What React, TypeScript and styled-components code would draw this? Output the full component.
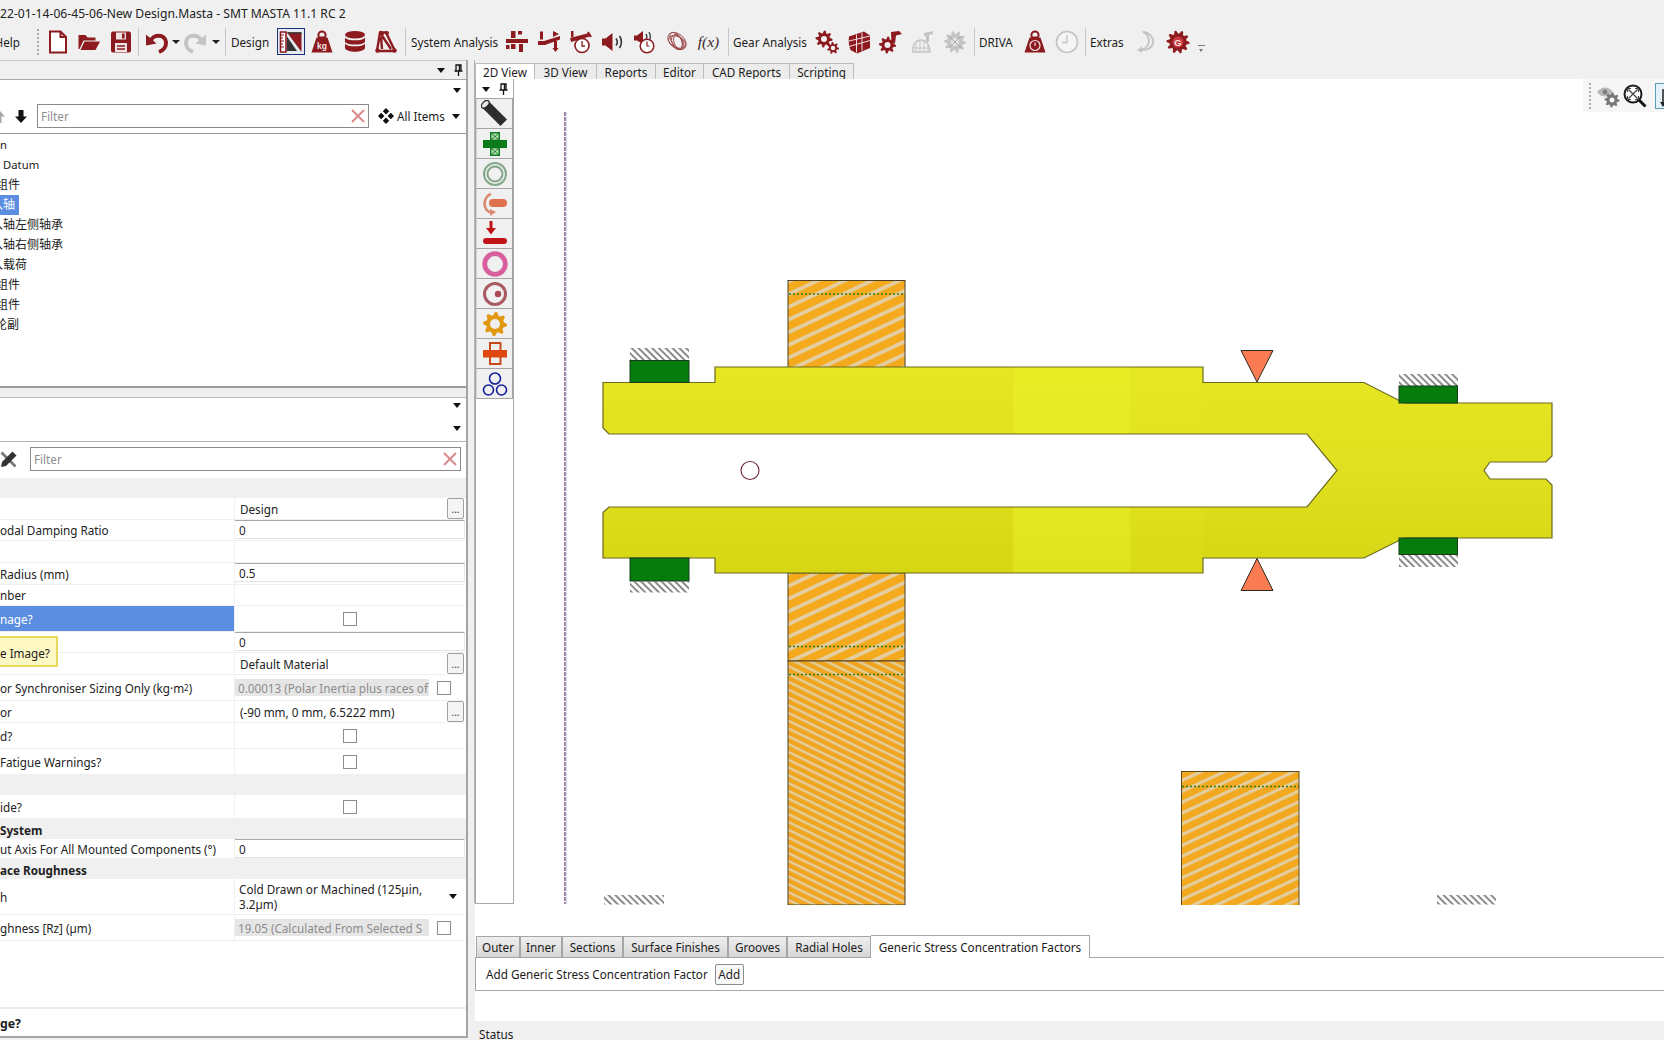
import React from "react";
import styled, { createGlobalStyle } from "styled-components";

const RED = "#8c1a1f";
const GRAYICON = "#c4c4c4";
const UI = '"Noto Sans", "Noto Sans CJK SC", sans-serif';

const Global = createGlobalStyle`
  html, body { margin: 0; padding: 0; }
  body { width: 1664px; height: 1040px; overflow: hidden; background: #f0f0f0; font-family: ${UI}; font-size: 11.7px; color: #1c1c1c; }
  #root { width: 1664px; height: 1040px; }
`;

const Window = styled.div`
  width: 1664px; height: 1040px; display: flex; flex-direction: column; overflow: hidden; background: #f0f0f0;
`;
const TitleBar = styled.div`
  height: 27px; line-height: 28px; font-size: 12.15px; white-space: nowrap; color: #222; flex: none;
`;
const Toolbar = styled.div`
  height: 33px; flex: none; display: flex; align-items: center; padding-bottom: 4px; box-sizing: border-box; position: relative;
`;
const HelpLabel = styled.div`
  width: 20px; display: flex; justify-content: flex-end; overflow: hidden; font-size: 11.7px; flex: none;
`;
const Grip = styled.div`
  width: 0; height: 26px; border-left: 2px dotted #a8a8a8; margin: 0 4px 0 17px; flex: none;
`;
const Sep = styled.div<{ $r?: number; $l?: number }>`
  width: 1px; height: 28px; background: #c8c8c8; flex: none; margin: 0 ${(p) => p.$r ?? 5}px 0 ${(p) => p.$l ?? 3}px;
`;
const ToolLabel = styled.div<{ $w: number }>`
  font-size: 11.7px; white-space: nowrap; flex: none; width: ${(p) => p.$w}px;
`;
const Slot = styled.div<{ $w?: number; $active?: boolean }>`
  width: ${(p) => p.$w ?? 32}px; height: 27px; flex: none; display: flex; align-items: center; justify-content: center;
  box-sizing: border-box;
  ${(p) => (p.$active ? "border: 1.5px solid #1d2f78; background: #e4ecf6;" : "")}
`;
const MiniCaret = styled.div<{ $r?: number; $l?: number }>`
  width: 0; height: 0; border-left: 4px solid transparent; border-right: 4px solid transparent; border-top: 4px solid #222;
  flex: none; margin: 0 ${(p) => p.$r ?? 0}px 0 ${(p) => p.$l ?? 0}px;
`;
const Overflow = styled.div`
  width: 7px; height: 8px; flex: none; margin: 16px 0 0 4px; border-top: 1px solid #777; position: relative;
  &::after { content: ""; position: absolute; left: 1px; top: 3px; border-left: 2.5px solid transparent; border-right: 2.5px solid transparent; border-top: 3px solid #777; }
`;

const Main = styled.div`flex: 1; display: flex; min-height: 0;`;
const LeftPanel = styled.div`
  width: 468px; flex: none; display: flex; flex-direction: column; background: #fff;
  border-right: 2px solid #a4a4a4; box-sizing: border-box; border-bottom: 2px solid #a4a4a4; height: 978px;
`;
const PanelHead = styled.div`
  height: 18px; flex: none; background: #f0f0f0; border-top: 1px solid #c8c8c8; border-bottom: 1px solid #a8a8a8;
  display: flex; align-items: center; justify-content: flex-end; gap: 9px; padding-right: 3px;
`;
const Caret = styled.div`
  width: 0; height: 0; border-left: 4.5px solid transparent; border-right: 4.5px solid transparent; border-top: 5px solid #111; flex: none;
`;
const CaretRow = styled.div<{ $h: number; $pt?: number }>`
  height: ${(p) => p.$h}px; flex: none; display: flex; align-items: center; justify-content: flex-end; padding-right: 5px; background: #fff;
  box-sizing: border-box; padding-top: ${(p) => p.$pt ?? 0}px;
`;
const FilterRow = styled.div<{ $h?: number; $pb?: number }>`
  height: ${(p) => p.$h ?? 32}px; flex: none; display: flex; align-items: center; background: #fff; box-sizing: border-box; padding-bottom: ${(p) => p.$pb ?? 0}px;
`;
const FilterBox = styled.div<{ $w: number; $ml: number }>`
  width: ${(p) => p.$w}px; margin-left: ${(p) => p.$ml}px; height: 24px; border: 1px solid #8a8a8a; box-sizing: border-box; background: #fff;
  display: flex; align-items: center; justify-content: space-between; padding: 0 3px; color: #8e8e8e; font-size: 11.7px; flex: none;
`;
const AllItems = styled.div`
  display: flex; align-items: center; margin-left: 9px; gap: 3px; font-size: 11.7px;
`;
const CaretSpacer = styled.span`width: 1px;`;
const ArrowSlot = styled.div<{ $ml: number }>`
  margin-left: ${(p) => p.$ml}px; display: flex; flex: none;
`;
const Tree = styled.div`
  height: 255px; flex: none; box-sizing: border-box; border-top: 1px solid #9a9a9a; border-bottom: 2px solid #9a9a9a; padding-top: 1px; background: #fff; overflow: hidden;
`;
const TreeRow = styled.div`
  height: 20px; line-height: 20px; white-space: nowrap; font-size: 12px; color: #222; display: flex; overflow: hidden;
`;
const TreeText = styled.span<{ $x: number; $sel?: boolean; $pad?: number; $latin?: boolean }>`
  margin-left: ${(p) => p.$x}px; padding-right: ${(p) => p.$pad ?? 0}px;
  ${(p) => (p.$latin ? "font-size: 11.3px;" : "")}
  ${(p) => (p.$sel ? "background: #5b8ee0; color: #fff;" : "")}
`;
const Splitter = styled.div`height: 10px; flex: none; box-sizing: border-box; background: #f0f0f0; border-bottom: 1px solid #b8b8b8;`;
const Divider = styled.div`height: 1px; flex: none; background: #b4b4b4;`;
const GroupBand = styled.div<{ $h: number }>`
  height: ${(p) => p.$h}px; flex: none; background: #f0f0f0; font-weight: 700; font-size: 11.7px; line-height: ${(p) => p.$h + 2}px; white-space: nowrap; color: #222;
`;
const Row = styled.div<{ $h: number }>`
  height: ${(p) => p.$h}px; flex: none; display: flex; background: #fff; box-sizing: border-box; border-bottom: 1px solid #f0f0f0; position: relative;
  width: 465px;
`;
const Label = styled.div<{ $sel?: boolean }>`
  width: 234px; flex: none; display: flex; align-items: center; white-space: nowrap; overflow: hidden; font-size: 11.7px; color: #222;
  box-sizing: border-box;
  ${(p) => (p.$sel ? "background: #5b8ee0; color: #fff;" : "")}
`;
const Value = styled.div<{ $center?: boolean }>`
  flex: 1; display: flex; align-items: center; border-left: 1px solid #f0f0f0; font-size: 11.7px; position: relative; min-width: 0; color: #222;
  ${(p) => (p.$center ? "justify-content: center;" : "")}
`;
const PlainValue = styled.span`padding-left: 5px; white-space: nowrap;`;
const NumberInput = styled.div`
  align-self: flex-start; width: 100%; height: 19px; line-height: 18px; border-top: 1px solid #a8a8a8; border-right: 1px solid #ececec; border-bottom: 1px solid #e4e4e4; box-sizing: border-box; padding-left: 4px;
  white-space: nowrap;
`;
const DotsButton = styled.div`
  position: absolute; right: 1px; top: 0; width: 17px; height: 21px; box-sizing: border-box; border: 1px solid #a0a0a0; border-radius: 2px; background: #f4f4f4;
  font-size: 10px; text-align: center; line-height: 20px; color: #333;
`;
const Check = styled.div`
  width: 14px; height: 14px; box-sizing: border-box; border: 1px solid #8c8c8c; background: #fff; flex: none;
`;
const DisabledInput = styled.div`
  width: 194px; height: 17px; line-height: 18px; background: #e6e6e6; color: #8c8c8c; font-size: 11.7px; padding-left: 3px; box-sizing: border-box; overflow: hidden; white-space: nowrap; flex: none;
`;
const SideCheck = styled.div`margin-left: 8px; display: flex;`;
const WrapValue = styled.div`
  padding: 1px 0 0 4px; width: 200px; line-height: 15px; font-size: 11.7px; box-sizing: content-box;
`;
const RightCaret = styled.div`margin-left: 10px;`;
const Tooltip = styled.div`
  position: absolute; left: 0; top: 636px; width: 58px; height: 31px; box-sizing: border-box; background: #fdf8c4; border: 2px solid #e9d95a; border-left: 0;
  display: flex; align-items: center; font-size: 11.7px; white-space: nowrap; overflow: hidden; z-index: 3; padding-top: 2px;
`;
const Filler = styled.div`flex: 1; background: #fff; border-bottom: 2px solid #ececec;`;
const FootRow = styled.div`height: 27px; flex: none; font-weight: 700; font-size: 12.3px; line-height: 29px; background: #fff; white-space: nowrap;`;

const Gutter = styled.div`
  width: 6px; flex: none; background: #f0f0f0; border-right: 1px solid #b4b4b4; height: 843px;
`;
const RightPanel = styled.div`flex: 1; min-width: 0; display: flex; flex-direction: column; position: relative;`;
const TopTabs = styled.div`height: 19px; flex: none; display: flex; align-items: flex-end; background: #f0f0f0;`;
const TopTab = styled.div<{ $w: number; $active?: boolean }>`
  width: ${(p) => p.$w}px; height: 16px; box-sizing: border-box; text-align: center; line-height: 17px; font-size: 11.7px; flex: none; white-space: nowrap;
  border: 1px solid #bcbcbc; border-bottom: 0; border-left-width: ${(p) => (p.$active ? 1 : 0)}px; background: ${(p) => (p.$active ? "#fff" : "#ececec")};
`;
const ViewArea = styled.div`height: 826px; flex: none; display: flex; background: #fff; position: relative;`;
const SideTools = styled.div`
  width: 39px; height: 825px; flex: none; box-sizing: border-box; border: 1px solid #a8a8a8; border-top: 0; background: #fff;
`;
const SideHead = styled.div`height: 20px; display: flex; align-items: center; justify-content: center; gap: 9px;`;
const SideButton = styled.div`
  height: 31px; box-sizing: border-box; border: 1px solid #a4a4a4; border-left-color: #d0d0d0; background: #f0f0f0; display: flex; align-items: center; justify-content: center;
  margin-top: -1px; &:first-of-type { margin-top: 0; }
`;
const Canvas = styled.svg`width: 1150px; height: 826px; display: block; flex: none;`;
const ViewTools = styled.div`
  position: absolute; right: 0; top: 0; width: 81px; height: 33px; background: #f6f6f6; display: flex; align-items: center; gap: 3px; padding-left: 6px; box-sizing: border-box; overflow: hidden;
  & > svg { flex: none; }
`;
const ViewGrip = styled.div`width: 0; height: 26px; border-left: 2px dotted #aaa; margin-right: 2px; flex: none;`;
const ViewActive = styled.div`
  width: 26px; height: 26px; flex: none; box-sizing: border-box; margin-left: 5px; border: 1.5px solid #5e9bb0; background: #e3f1f8; display: flex; align-items: center; padding-left: 2px;
  & > svg { flex: none; }
`;
const BottomGap = styled.div`height: 30px; flex: none; background: #fff;`;
const BottomTabs = styled.div`
  height: 22px; flex: none; background: #fff; display: flex; align-items: flex-end; padding-left: 1px; position: relative; z-index: 1;
`;
const BottomTab = styled.div<{ $w: number; $active?: boolean }>`
  width: ${(p) => p.$w}px; flex: none; box-sizing: border-box; text-align: center; font-size: 11.7px; white-space: nowrap;
  height: ${(p) => (p.$active ? 23 : 21)}px; line-height: ${(p) => (p.$active ? 23 : 21)}px;
  border: 1px solid #a6a6a6; border-bottom: 0; border-left-width: ${(p) => (p.$active ? 0 : 1)}px;
  background: ${(p) => (p.$active ? "#fff" : "linear-gradient(#efefef,#d6d6d6)")};
  ${(p) => (p.$active ? "margin-bottom: -1px;" : "")}
`;
const AddBar = styled.div`
  height: 34px; flex: none; box-sizing: border-box; background: #fff; border: 1px solid #a6a6a6; border-right: 0; display: flex; align-items: center; padding-left: 10px; gap: 7px; font-size: 11.7px; white-space: nowrap;
`;
const AddButton = styled.div`
  width: 29px; height: 21px; box-sizing: border-box; border: 1px solid #8c8c8c; border-radius: 2px; text-align: center; line-height: 19px; background: #f8f8f8; font-size: 11.7px;
`;
const BlankBar = styled.div`height: 30px; flex: none; background: #fff;`;
const StatusBar = styled.div`flex: 1; background: #f0f0f0; padding-left: 4px; font-size: 11.7px; line-height: 26px; overflow: hidden;`;
const Sup = styled.sup`font-size: 8px; line-height: 0;`;

type IconProps = { c?: string };
const gearPath = (cx: number, cy: number, r: number, teeth: number, depth = 2.6) => {
  const pts: string[] = [];
  const n = teeth * 4;
  for (let i = 0; i < n; i++) {
    const a = (i / n) * Math.PI * 2;
    const rr = i % 4 < 2 ? r : r - depth;
    pts.push(`${(cx + rr * Math.cos(a)).toFixed(2)} ${(cy + rr * Math.sin(a)).toFixed(2)}`);
  }
  return "M" + pts.join("L") + "Z";
};
const Ico: React.FC<{ s?: number; children: React.ReactNode }> = ({ s = 24, children }) => (
  <svg width={s} height={s} viewBox="0 0 24 24">{children}</svg>
);
const NewDocIcon = ({ c = RED }: IconProps) => (
  <Ico><path d="M4 1.5h10.5l5.5 5.5v15.5H4z M14.5 1.5V7h5.5" fill="#fff" stroke={c} strokeWidth="2" /></Ico>
);
const OpenIcon = ({ c = RED }: IconProps) => (
  <Ico><path d="M1.5 5h7l2 2.5h8v3H6.5L2.5 19H1.5z" fill={c} /><path d="M7.5 11.5H23L18.5 20H3.5z" fill={c} /></Ico>
);
const SaveIcon = ({ c = RED }: IconProps) => (
  <Ico><path d="M2 3.5Q2 1.5 4 1.5h16Q22 1.5 22 3.5v17Q22 22.5 20 22.5H4Q2 22.5 2 20.5z" fill={c} /><rect x="7" y="2.5" width="10" height="7" fill="#efe4e4" /><rect x="13" y="3.5" width="2.6" height="5" fill={c} /><rect x="6" y="13" width="12" height="9" fill="#efe4e4" /><path d="M8 16h8M8 19h8" stroke={c} strokeWidth="1.4" /></Ico>
);
const UndoIcon = ({ c = RED }: IconProps) => (
  <Ico><path d="M6 10.5C8 4.5 20 3.5 21 12c.5 5-3 8.5-7 10" fill="none" stroke={c} strokeWidth="4" /><path d="M1 4.5l0 11 10.5-2z" fill={c} /></Ico>
);
const RedoIcon = ({ c = GRAYICON }: IconProps) => (
  <Ico><path d="M18 10.5C16 4.5 4 3.5 3 12c-.5 5 3 8.5 7 10" fill="none" stroke={c} strokeWidth="4" /><path d="M23 4.5v11L12.5 13.5z" fill={c} /></Ico>
);
const DesignIcon = () => (
  <Ico>
    <path d="M1.5 2h5.5v20H1.5z" fill="#fff" stroke={RED} strokeWidth="1.6" />
    <path d="M2 5h3M2 8h2M2 11h3M2 14h2M2 17h3" stroke={RED} strokeWidth="1" />
    <path d="M8 2.5h14.5v19.5z" fill={RED} /><path d="M8 6.5L18 21H8z" fill="#333" />
    <path d="M8.5 3h14" stroke="#333" strokeWidth="1.5" />
  </Ico>
);
const WeightIcon = ({ label }: { label: string }) => (
  <Ico>
    <path d="M12 1.5a3.6 3.6 0 0 1 3.6 3.6c0 1-.3 1.7-.8 2.4H9.2c-.5-.7-.8-1.4-.8-2.4A3.6 3.6 0 0 1 12 1.5z" fill="none" stroke={RED} strokeWidth="2" />
    <path d="M6.5 7.5h11L22.5 22.5H1.5z" fill={RED} />
    <text x="12" y="19" textAnchor="middle" fontSize="8.5" fontWeight="700" fill="#f2e3e3" fontFamily="Liberation Sans, sans-serif">{label}</text>
  </Ico>
);
const DbIcon = () => (
  <Ico>
    <ellipse cx="12" cy="4.8" rx="10" ry="3.8" fill={RED} />
    <path d="M2 7.5c2 3.8 18 3.8 20 0v4.2c-2 3.8-18 3.8-20 0z" fill={RED} />
    <path d="M2 13.5c2 3.8 18 3.8 20 0v4.5c-1.5 5-18.5 5-20 0z" fill={RED} />
  </Ico>
);
const FrameIcon = () => (
  <Ico>
    <path d="M6 2.5h6L21 21H3zM7 7L8 19M7.5 5L17 19M9 2.5l-1 4" fill="none" stroke={RED} strokeWidth="2.4" strokeLinejoin="round" />
    <circle cx="3.5" cy="20.5" r="2.2" fill={RED} /><circle cx="20.5" cy="20.5" r="2.2" fill={RED} /><circle cx="7" cy="3" r="2.2" fill={RED} /><circle cx="13" cy="3" r="2" fill={RED} />
  </Ico>
);
const ShaftCrossIcon = () => (
  <Ico><path d="M1 9h22v4H1z" fill={RED} /><rect x="6" y="1" width="4.5" height="7" fill={RED} /><rect x="13" y="1" width="4" height="3.5" fill={RED} /><rect x="6" y="14" width="4.5" height="5" fill={RED} /><rect x="14" y="14" width="4" height="8" fill={RED} /><rect x="1" y="15" width="3.5" height="4" fill={RED} /></Ico>
);
const ShaftBendIcon = () => (
  <Ico><path d="M1 11h6l16-5v3.5L8 15H1z" fill={RED} /><rect x="3" y="1.5" width="3" height="8" fill={RED} /><rect x="17" y="11" width="3" height="9" fill={RED} /><path d="M18.5 22l-3-4h6z" fill={RED} /><path d="M16 1l6 3-6 3z" fill={RED} /></Ico>
);
const BeamClockIcon = () => (
  <Ico>
    <path d="M1 8l19-5 .8 3.5L2 12z" fill={RED} /><rect x="2" y="1" width="2.5" height="6" fill={RED} /><path d="M19 2l3 5" stroke={RED} strokeWidth="2" />
    <circle cx="13" cy="15.5" r="7" fill="#fff" stroke={RED} strokeWidth="1.6" /><path d="M13 11v5h3" fill="none" stroke={RED} strokeWidth="1.3" />
  </Ico>
);
const SpeakerIcon = () => (
  <Ico><path d="M1 8.5h3.5L11.5 3v18L4.5 15.5H1z" fill={RED} /><path d="M15 8.5c1.5 2 1.5 5 0 7M18.5 6c2.5 3.5 2.5 8.5 0 12" fill="none" stroke="#333" strokeWidth="1.6" /></Ico>
);
const SpeakerClockIcon = () => (
  <Ico><path d="M1 5.5h3L10 1v13L4 10.5H1z" fill={RED} /><path d="M13 4c1 1.5 1 4 0 5.5M16 2c1.5 3 1.5 7 0 9" fill="none" stroke="#333" strokeWidth="1.3" /><circle cx="14" cy="16" r="6.8" fill="#fff" stroke={RED} strokeWidth="1.5" /><path d="M14 11.5V16h2.5" fill="none" stroke={RED} strokeWidth="1.2" /></Ico>
);
const ScribbleIcon = () => (
  <Ico>
    <g fill="none" stroke="#9c4a4a" strokeWidth="0.9">
      <ellipse cx="12" cy="11" rx="10.5" ry="7" transform="rotate(40 12 11)" />
      <ellipse cx="12" cy="11" rx="10" ry="5" transform="rotate(55 12 11)" />
      <ellipse cx="12" cy="12" rx="9" ry="5.5" transform="rotate(25 12 12)" />
      <ellipse cx="13" cy="12" rx="7" ry="4" transform="rotate(70 13 12)" />
      <ellipse cx="12" cy="12" rx="5" ry="8" transform="rotate(-20 12 12)" />
    </g>
  </Ico>
);
const FxLabel = styled.span`font-family: "Liberation Serif", serif; font-style: italic; font-size: 15.5px; color: #3a2a2a; white-space: nowrap;`;
const GearsIcon = () => (
  <Ico><path d={gearPath(9, 9, 8.5, 8)} fill={RED} /><circle cx="9" cy="9" r="3" fill="#f0f0f0" /><path d={gearPath(18, 18, 6, 7, 2)} fill={RED} /><circle cx="18" cy="18" r="2.2" fill="#f0f0f0" /></Ico>
);
const BlockIcon = () => (
  <Ico><path d="M2 6.5L17 1.5l6 4V18l-13 5.5L3.5 20Q1 14 2 6.5z" fill={RED} /><path d="M9.5 4.5v18M15 2.5v18M2 11l21-5M2 16.5l21-6" stroke="#f0e0e0" strokeWidth="1" fill="none" /></Ico>
);
const GearToolIcon = ({ c = RED }: IconProps) => (
  <Ico><path d={gearPath(8.5, 15, 8.5, 8)} fill={c} /><circle cx="8.5" cy="15" r="3" fill="#f0f0f0" /><path d="M12 2l8-1 3 3-6 1.5-1 8h-3.5z" fill={c} /></Ico>
);
const BellHammerIcon = () => (
  <Ico><path d="M2 22c-1-7 3-12 8-12s9 5 9 12z" fill="none" stroke={GRAYICON} strokeWidth="1.5" /><path d="M5 14v8M9 11v11M13 11v11M17 15v7M2 18h17" stroke={GRAYICON} strokeWidth="1" /><path d="M13 3l9-2v3l-4 1v7h-3V6l-2 .5z" fill={GRAYICON} /></Ico>
);
const HatchGearIcon = () => (
  <Ico><path d={gearPath(12, 12, 11, 10, 3)} fill={GRAYICON} /><circle cx="12" cy="12" r="4" fill="#e4e4e4" /><path d="M6 6l12 12M18 6L6 18" stroke="#aaa" strokeWidth="1" /></Ico>
);
const WeightClockIcon = () => (
  <Ico>
    <path d="M12 1.5a3.6 3.6 0 0 1 3.6 3.6c0 1-.3 1.7-.8 2.4H9.2c-.5-.7-.8-1.4-.8-2.4A3.6 3.6 0 0 1 12 1.5z" fill="none" stroke={RED} strokeWidth="2" />
    <path d="M6.5 7.5h11L22.5 22.5H1.5z" fill={RED} />
    <circle cx="12" cy="15.5" r="5" fill="none" stroke="#f2e3e3" strokeWidth="1.2" /><path d="M12 12.5v3.5" stroke="#f2e3e3" strokeWidth="1.2" />
  </Ico>
);
const ClockIcon = () => (
  <Ico><circle cx="12" cy="12" r="10.5" fill="#f4f4f4" stroke={GRAYICON} strokeWidth="1.6" /><path d="M12 5v7.5H7" fill="none" stroke={GRAYICON} strokeWidth="1.3" /></Ico>
);
const MoonIcon = () => (
  <Ico><path d="M9 2c8 1 11 7 10 11-1 5-6 7-11 7 4-2 7-5 7-9S13 4 9 2z" fill="none" stroke={GRAYICON} strokeWidth="1.8" /><path d="M3 20l5-3.5v6.5z" fill={GRAYICON} /></Ico>
);
const GearGIcon = () => (
  <Ico>
    <path d={gearPath(12, 12, 11.5, 10, 3)} fill={RED} />
    <circle cx="12" cy="12" r="5.5" fill="#c93a42" />
    <text x="12" y="15.5" textAnchor="middle" fontSize="9.5" fontWeight="700" fill="#f6e0e0" fontFamily="Liberation Sans, sans-serif">G</text>
  </Ico>
);
const PinIcon = () => (
  <svg width="9" height="12" viewBox="0 0 9 12"><path d="M2 1h5v6H2z M0.5 7h8M4.5 7v5" fill="none" stroke="#111" strokeWidth="1.3" /><path d="M5.5 1v6" stroke="#111" strokeWidth="1.5" /></svg>
);
const FilterX = () => (
  <svg width="14" height="14" viewBox="0 0 14 14"><path d="M1 1l12 12M13 1L1 13" stroke="#d98b8b" strokeWidth="2" /></svg>
);
const ArrowGlyph = ({ up }: { up?: boolean }) => (
  <svg width="14" height="13" viewBox="0 0 14 13"><path d={up ? "M7 0l6 6.5H9.5V13h-5V6.5H1z" : "M7 13L13 6.5H9.5V0h-5v6.5H1z"} fill={up ? "#a8a8a8" : "#111"} /></svg>
);
const DiamondsIcon = () => (
  <svg width="16" height="16" viewBox="0 0 16 16" fill="#111"><path d="M8 0l3.2 3.2L8 6.4 4.8 3.2zM3.2 4.8L6.4 8 3.2 11.2 0 8zM12.8 4.8L16 8l-3.2 3.2L9.6 8zM8 9.6l3.2 3.2L8 16l-3.2-3.2z" /></svg>
);
const PencilX = () => (
  <svg width="18" height="18" viewBox="0 0 18 18"><path d="M1.5 2.5l14 14" stroke="#777" strokeWidth="2.6" /><path d="M1 17l1-5L12.5 1.5 16.5 5.5 6 16z" fill="#333" /></svg>
);

const SideShaft = () => (
  <svg width="27" height="27" viewBox="0 0 27 27"><path d="M7.5 1L26 19.5 19.5 26 1 7.5z" fill="#2e2e2e" /><ellipse cx="4.3" cy="4.3" rx="4.6" ry="2.8" transform="rotate(-45 4.3 4.3)" fill="#e8e8e8" stroke="#222" strokeWidth="1.2" /></svg>
);
const SideCross = () => (
  <svg width="26" height="26" viewBox="0 0 26 26"><path d="M1 9h24v8H1z" fill="#0b7a1a" /><rect x="8" y="1" width="10" height="24" fill="#0b7a1a" /><rect x="9.5" y="2.5" width="7" height="6" fill="#bfe3bf" /><rect x="9.5" y="17.5" width="7" height="6" fill="#bfe3bf" /><path d="M9.5 2.5l7 6M16.5 2.5l-7 6M9.5 17.5l7 6M16.5 17.5l-7 6" stroke="#0b7a1a" strokeWidth="1" /></svg>
);
const SideRings = () => (
  <svg width="26" height="26" viewBox="0 0 26 26"><circle cx="13" cy="13" r="11" fill="none" stroke="#84a78a" strokeWidth="2" /><circle cx="13" cy="13" r="7.5" fill="none" stroke="#84a78a" strokeWidth="2" /></svg>
);
const SideTurn = () => (
  <svg width="26" height="26" viewBox="0 0 26 26"><rect x="7" y="8" width="18" height="8" rx="4" fill="#e0714f" /><path d="M9 3C3 5 1 13 4 18c1 2 3 3 5 3.5" fill="none" stroke="#d98a70" strokeWidth="2.6" /><path d="M8 25l6-4-6-3z" fill="#d98a70" /></svg>
);
const SideDown = () => (
  <svg width="26" height="26" viewBox="0 0 26 26"><rect x="1" y="17" width="24" height="6" rx="3" fill="#c01418" /><path d="M7.5 0h3v7H14l-5 6.5L4 7h3.5z" fill="#c01418" /></svg>
);
const SideRing = () => (
  <svg width="26" height="26" viewBox="0 0 26 26"><circle cx="13" cy="13" r="10.3" fill="none" stroke="#d85f9e" strokeWidth="4.8" /></svg>
);
const SideDot = () => (
  <svg width="26" height="26" viewBox="0 0 26 26"><circle cx="13" cy="13" r="10.5" fill="none" stroke="#a95a62" strokeWidth="3" /><circle cx="16" cy="13" r="3.2" fill="#a94a55" /></svg>
);
const SideGear = () => (
  <svg width="26" height="26" viewBox="0 0 26 26"><path d={gearPath(13, 13, 12, 8, 3)} fill="#e0980f" /><circle cx="13" cy="13" r="5" fill="#f0f0f0" /></svg>
);
const SidePlus = () => (
  <svg width="26" height="26" viewBox="0 0 26 26"><path d="M1 9h24v7.5H1z" fill="#e04810" /><rect x="8" y="2" width="10.5" height="21" fill="#f0f0f0" stroke="#c64a1c" strokeWidth="2" /><rect x="7" y="9" width="12.5" height="7.5" fill="#e04810" /></svg>
);
const SideTriad = () => (
  <svg width="26" height="26" viewBox="0 0 26 26" fill="none" stroke="#141e9a" strokeWidth="1.6"><circle cx="13" cy="7.5" r="5.5" /><circle cx="6.5" cy="19" r="5" /><circle cx="19.5" cy="19" r="5" /></svg>
);
const EyeGear = () => (
  <svg width="24" height="24" viewBox="0 0 24 24"><path d="M1 8c4-6 12-6 16 0-4 6-12 6-16 0z" fill="#b9b9b9" /><circle cx="9" cy="8" r="2.4" fill="#7e7e7e" /><path d={gearPath(16, 16, 7.5, 8, 2)} fill="#777" /><circle cx="16" cy="16" r="2.5" fill="#f6f6f6" /></svg>
);
const ZoomFit = () => (
  <svg width="24" height="24" viewBox="0 0 24 24"><circle cx="10" cy="10" r="8.5" fill="#fff" stroke="#1c1c1c" strokeWidth="2" /><path d="M5.5 5.5l9 9M14.5 5.5l-9 9" stroke="#444" strokeWidth="1.3" /><path d="M4.5 8V4.5H8M12 4.5h3.5V8M15.5 12v3.5H12M8 15.5H4.5V12" fill="none" stroke="#444" strokeWidth="1.2" /><path d="M16 16l6.5 6.5" stroke="#111" strokeWidth="3" /></svg>
);
const AxisIcon = () => (
  <svg width="22" height="22" viewBox="0 0 22 22"><path d="M5 20V5h9" fill="none" stroke="#222" strokeWidth="1.5" /><path d="M5 22l-3-5h6z" fill="#222" /><rect x="14" y="1" width="8" height="7" fill="#222" /></svg>
);

const Hatch = ({ id, period, width, angle, stripe, bg }: { id: string; period: number; width: number; angle: number; stripe: string; bg?: string }) => (
  <pattern id={id} width={period} height={period} patternUnits="userSpaceOnUse" patternTransform={`rotate(${angle})`}>
    {bg && <rect width={period} height={period} fill={bg} />}
    <rect width={period} height={width} fill={stripe} />
  </pattern>
);
const SHAFT = "M609 434L1307 434L1337 470.5L1307 507L609 507L603 512.5L603 558L715 558L715 573L1203 573L1203 558L1364 558L1404 538L1552 538L1552 485L1546 479L1490 479L1484 470.5L1490 462L1546 462L1552 456L1552 403L1404 403L1364 382.5L1203 382.5L1203 367L715 367L715 382.5L603 382.5L603 428Z";

const Drawing = () => (
  <Canvas viewBox="514 79 1150 826">
    <defs>
      <Hatch id="gearA" period={11.5} width={3.8} angle={-25} stripe="#e4cd9e" bg="#f5a91c" />
      <Hatch id="gearC" period={9.8} width={3.2} angle={-25} stripe="#e4cd9e" bg="#f2a81f" />
      <Hatch id="gearB" period={7} width={2.4} angle={26} stripe="#e4cd9e" bg="#f0a520" />
      <Hatch id="race" period={4.8} width={2} angle={45} stripe="#8a8a8a" />
      <linearGradient id="shaftG" x1="0" y1="0" x2="0" y2="1">
        <stop offset="0" stopColor="#e6e622" />
        <stop offset="0.5" stopColor="#e0e020" />
        <stop offset="1" stopColor="#d6d614" />
      </linearGradient>
      <clipPath id="shaftClip"><path d={SHAFT} /></clipPath>
    </defs>
    <path d="M565 112V904" stroke="#7a3a6a" strokeWidth="1.4" strokeDasharray="4 1" />
    <path d="M566.2 112V904" stroke="#bcd8ee" strokeWidth="1" />

    <rect x="788" y="280.5" width="117" height="87" fill="url(#gearA)" stroke="#4a4026" strokeWidth="1" />
    <rect x="788" y="573" width="117" height="88" fill="url(#gearA)" stroke="#4a4026" strokeWidth="1" />
    <rect x="788" y="661" width="117" height="244" fill="url(#gearB)" stroke="#4a4026" strokeWidth="1" />
    <rect x="1181.5" y="771.5" width="117.5" height="134" fill="url(#gearC)" stroke="#5a4a20" strokeWidth="1" />
    <g stroke="#2f7a12" strokeWidth="1.7" strokeDasharray="2 2">
      <path d="M789 294H905M789 646.5H905M789 674.5H905M1182 786.5H1299" />
    </g>

    <rect x="630" y="348" width="59" height="12" fill="url(#race)" />
    <rect x="630" y="581.5" width="59" height="11" fill="url(#race)" />
    <rect x="1399" y="374" width="59" height="12" fill="url(#race)" />
    <rect x="1399" y="555" width="59" height="12" fill="url(#race)" />
    <rect x="604" y="895" width="60" height="9.5" fill="url(#race)" />
    <rect x="1437" y="895" width="59" height="9.5" fill="url(#race)" />

    <path d={SHAFT} fill="url(#shaftG)" />
    <g clipPath="url(#shaftClip)">
      <rect x="1013" y="360" width="117" height="220" fill="#e8f52a" opacity="0.45" />
      <rect x="1130" y="360" width="73" height="220" fill="#e8ee2a" opacity="0.2" />
    </g>
    <path d={SHAFT} fill="none" stroke="#6a6a20" strokeWidth="1.2" />

    <rect x="630" y="360.5" width="59" height="22" fill="#067c0c" stroke="#153a1c" strokeWidth="1" />
    <rect x="630" y="558" width="59" height="23" fill="#067c0c" stroke="#153a1c" strokeWidth="1" />
    <rect x="1399" y="386" width="58.5" height="17" fill="#067c0c" stroke="#153a1c" strokeWidth="1" />
    <rect x="1399" y="538" width="58.5" height="16.5" fill="#067c0c" stroke="#153a1c" strokeWidth="1" />

    <path d="M1241 350.5H1273L1257 382z" fill="#fb7b52" stroke="#2e2a20" strokeWidth="1" />
    <path d="M1241 590.5H1273L1257 558.5z" fill="#fb7b52" stroke="#2e2a20" strokeWidth="1" />
    <circle cx="750" cy="470.5" r="9" fill="#fff" stroke="#6d2230" strokeWidth="1.1" />
  </Canvas>
);

type Prop = {
  h: number;
  label?: React.ReactNode;
  sel?: boolean;
  value?: React.ReactNode;
  center?: boolean;
};
const props: Prop[] = [
  { h: 22, value: <><PlainValue>Design</PlainValue><DotsButton>...</DotsButton></> },
  { h: 21, label: "odal Damping Ratio", value: <NumberInput>0</NumberInput> },
  { h: 22 },
  { h: 22, label: "Radius (mm)", value: <NumberInput>0.5</NumberInput> },
  { h: 21, label: "nber" },
  { h: 26, label: "nage?", sel: true, center: true, value: <Check /> },
  { h: 21, value: <NumberInput>0</NumberInput> },
  { h: 22, value: <><PlainValue>Default Material</PlainValue><DotsButton>...</DotsButton></> },
  { h: 26, label: <>or Synchroniser Sizing Only (kg·m<Sup>2</Sup>)</>, value: <><DisabledInput>0.00013 (Polar Inertia plus races of</DisabledInput><SideCheck><Check /></SideCheck></> },
  { h: 22, label: "or", value: <><PlainValue>(-90 mm, 0 mm, 6.5222 mm)</PlainValue><DotsButton>...</DotsButton></> },
  { h: 26, label: "d?", center: true, value: <Check /> },
  { h: 26, label: "Fatigue Warnings?", center: true, value: <Check /> },
];

const treeRows: { t: string; x: number; sel?: boolean; pad?: number; latin?: boolean }[] = [
  { t: "n", x: 0, latin: true },
  { t: "Datum", x: 3, latin: true },
  { t: "组件", x: -4 },
  { t: "入轴", x: -9, sel: true, pad: 4 },
  { t: "入轴左侧轴承", x: -9 },
  { t: "入轴右侧轴承", x: -9 },
  { t: "入载荷", x: -9 },
  { t: "组件", x: -4 },
  { t: "组件", x: -4 },
  { t: "轮副", x: -5 },
];

export default function App() {
  return (
    <Window>
      <Global />
      <TitleBar>22-01-14-06-45-06-New Design.Masta - SMT MASTA 11.1 RC 2</TitleBar>
      <Toolbar>
        <HelpLabel>Help</HelpLabel>
        <Grip />
        <Slot $w={30}><NewDocIcon /></Slot>
        <Slot $w={32}><OpenIcon /></Slot>
        <Slot $w={31}><SaveIcon /></Slot>
        <Sep $l={2} $r={3} />
        <Slot $w={30}><UndoIcon /></Slot>
        <MiniCaret $r={2} />
        <Slot $w={25}><RedoIcon /></Slot>
        <MiniCaret $l={5} />
        <Sep $l={5} $r={5} />
        <ToolLabel $w={46}>Design</ToolLabel>
        <Slot $w={28} $active><DesignIcon /></Slot>
        <Slot $w={34}><WeightIcon label="kg" /></Slot>
        <Slot $w={32}><DbIcon /></Slot>
        <Slot $w={30}><FrameIcon /></Slot>
        <Sep $l={4} $r={5} />
        <ToolLabel $w={90}>System Analysis</ToolLabel>
        <Slot><ShaftCrossIcon /></Slot>
        <Slot><ShaftBendIcon /></Slot>
        <Slot><BeamClockIcon /></Slot>
        <Slot><SpeakerIcon /></Slot>
        <Slot><SpeakerClockIcon /></Slot>
        <Slot><ScribbleIcon /></Slot>
        <Slot $w={31}><FxLabel>f(x)</FxLabel></Slot>
        <Sep $l={4} $r={4} />
        <ToolLabel $w={78}>Gear Analysis</ToolLabel>
        <Slot><GearsIcon /></Slot>
        <Slot><BlockIcon /></Slot>
        <Slot><GearToolIcon /></Slot>
        <Slot><BellHammerIcon /></Slot>
        <Slot><HatchGearIcon /></Slot>
        <Sep $l={3} $r={4} />
        <ToolLabel $w={40}>DRIVA</ToolLabel>
        <Slot><WeightClockIcon /></Slot>
        <Slot><ClockIcon /></Slot>
        <Sep $l={2} $r={4} />
        <ToolLabel $w={40}>Extras</ToolLabel>
        <Slot><MoonIcon /></Slot>
        <Slot><GearGIcon /></Slot>
        <Overflow />
      </Toolbar>
      <Main>
        <LeftPanel>
          <PanelHead><Caret /><PinIcon /></PanelHead>
          <CaretRow $h={21}><Caret /></CaretRow>
          <FilterRow $pb={2}>
            <ArrowSlot $ml={-8}><ArrowGlyph up /></ArrowSlot>
            <ArrowSlot $ml={8}><ArrowGlyph /></ArrowSlot>
            <FilterBox $w={332} $ml={9}><span>Filter</span><FilterX /></FilterBox>
            <AllItems><DiamondsIcon /><span>All Items</span><CaretSpacer /><Caret /></AllItems>
          </FilterRow>
          <Tree>
            {treeRows.map((r, i) => (
              <TreeRow key={i}><TreeText $x={r.x} $sel={r.sel} $pad={r.pad} $latin={r.latin}>{r.t}</TreeText></TreeRow>
            ))}
          </Tree>
          <Splitter />
          <CaretRow $h={15}><Caret /></CaretRow>
          <CaretRow $h={28} $pt={3}><Caret /></CaretRow>
          <Divider />
          <FilterRow $h={36} $pb={2}>
            <PencilX />
            <FilterBox $w={431} $ml={12}><span>Filter</span><FilterX /></FilterBox>
          </FilterRow>
          <GroupBand $h={20} />
          {props.map((p, i) => (
            <Row key={i} $h={p.h}>
              <Label $sel={p.sel}>{p.label}</Label>
              <Value $center={p.center}>{p.value}</Value>
            </Row>
          ))}
          <GroupBand $h={20} />
          <Row $h={24}><Label>ide?</Label><Value $center><Check /></Value></Row>
          <GroupBand $h={20}>System</GroupBand>
          <Row $h={20}><Label>ut Axis For All Mounted Components (°)</Label><Value><NumberInput>0</NumberInput></Value></Row>
          <GroupBand $h={20}>ace Roughness</GroupBand>
          <Row $h={36}>
            <Label>h</Label>
            <Value><WrapValue>Cold Drawn or Machined (125µin, 3.2µm)</WrapValue><RightCaret><Caret /></RightCaret></Value>
          </Row>
          <Row $h={26}>
            <Label>ghness [Rz] (µm)</Label>
            <Value><DisabledInput>19.05 (Calculated From Selected S</DisabledInput><SideCheck><Check /></SideCheck></Value>
          </Row>
          <Filler />
          <FootRow>ge?</FootRow>
        </LeftPanel>
        <Tooltip>e Image?</Tooltip>
        <Gutter />
        <RightPanel>
          <TopTabs>
            <TopTab $w={60} $active>2D View</TopTab>
            <TopTab $w={62}>3D View</TopTab>
            <TopTab $w={59}>Reports</TopTab>
            <TopTab $w={48}>Editor</TopTab>
            <TopTab $w={86}>CAD Reports</TopTab>
            <TopTab $w={64}>Scripting</TopTab>
          </TopTabs>
          <ViewArea>
            <SideTools>
              <SideHead><Caret /><PinIcon /></SideHead>
              <SideButton><SideShaft /></SideButton>
              <SideButton><SideCross /></SideButton>
              <SideButton><SideRings /></SideButton>
              <SideButton><SideTurn /></SideButton>
              <SideButton><SideDown /></SideButton>
              <SideButton><SideRing /></SideButton>
              <SideButton><SideDot /></SideButton>
              <SideButton><SideGear /></SideButton>
              <SideButton><SidePlus /></SideButton>
              <SideButton><SideTriad /></SideButton>
            </SideTools>
            <Drawing />
            <ViewTools>
              <ViewGrip />
              <EyeGear />
              <ZoomFit />
              <ViewActive><AxisIcon /></ViewActive>
            </ViewTools>
          </ViewArea>
          <BottomGap />
          <BottomTabs>
            <BottomTab $w={44}>Outer</BottomTab>
            <BottomTab $w={42}>Inner</BottomTab>
            <BottomTab $w={61}>Sections</BottomTab>
            <BottomTab $w={105}>Surface Finishes</BottomTab>
            <BottomTab $w={59}>Grooves</BottomTab>
            <BottomTab $w={84}>Radial Holes</BottomTab>
            <BottomTab $w={219} $active>Generic Stress Concentration Factors</BottomTab>
          </BottomTabs>
          <AddBar>
            <span>Add Generic Stress Concentration Factor</span>
            <AddButton>Add</AddButton>
          </AddBar>
          <BlankBar />
          <StatusBar>Status</StatusBar>
        </RightPanel>
      </Main>
    </Window>
  );
}
